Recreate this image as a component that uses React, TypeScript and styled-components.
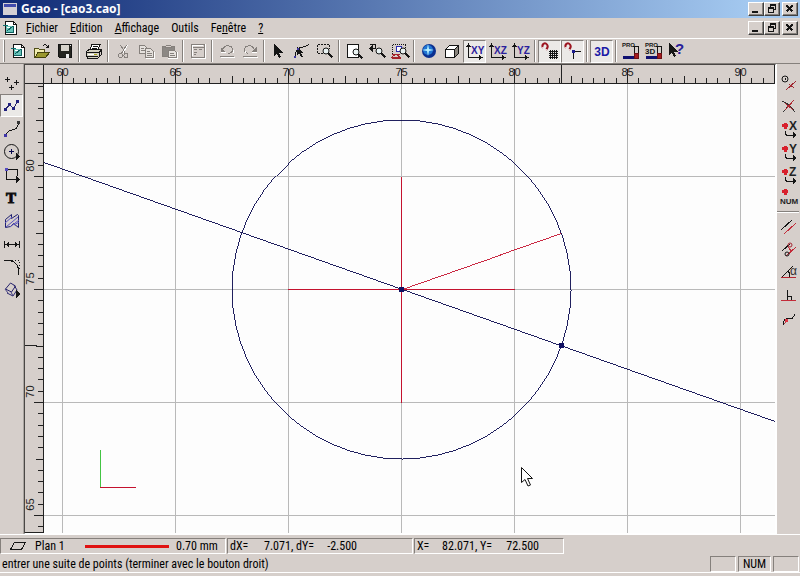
import React from "react";
import styled, { createGlobalStyle, css } from "styled-components";

const face = "#d6cfcb";
const shade = "#85807c";
const ink = "#151515";
const navy = "#08084e";
const red = "#c4122f";

const GlobalStyle = createGlobalStyle`
  * { box-sizing: border-box; }
  body { margin: 0; background: ${face}; }
  body, button {
    font-family: "Roboto Condensed", Roboto, "Liberation Sans", sans-serif;
    font-size: 12px;
    line-height: 14px;
    color: #000;
  }
`;

const Window = styled.div`
  display: flex;
  flex-direction: column;
  height: 100vh;
  background: ${face};
  cursor: default;
  overflow: hidden;
`;

const TitleBar = styled.header`
  flex: none;
  display: flex;
  align-items: center;
  height: 18px;
  padding: 0 2px 0 3px;
  gap: 4px;
  background: linear-gradient(90deg, #0f2a75 0%, #a4c9f0 94%);
`;

const Title = styled.h1`
  flex: 1;
  margin: 0;
  color: #fff;
  font: bold 12px/18px "Noto Sans", "Open Sans", sans-serif;
  white-space: pre;
`;

const MenuBar = styled.nav`
  flex: none;
  display: flex;
  align-items: center;
  height: 21px;
  padding: 0 2px 0 3px;
  border-bottom: 1px solid #fff;
`;

const MenuItems = styled.div`
  display: flex;
  flex: 1;
  padding-left: 1px;
`;

const MenuItem = styled.button`
  border: 0;
  padding: 0 6px;
  background: none;
  line-height: 18px;
  white-space: nowrap;
`;

const WindowButtons = styled.div`
  display: flex;
`;

const WindowButton = styled.button<{ $apart?: boolean }>`
  display: flex;
  align-items: center;
  justify-content: center;
  width: 16px;
  height: 14px;
  margin-left: ${(p) => (p.$apart ? 2 : 0)}px;
  padding: 0;
  background: ${face};
  border: 1px solid;
  border-color: #fff #404040 #404040 #fff;
  box-shadow: inset -1px -1px 0 ${shade};
`;

const ToolBar = styled.div`
  flex: none;
  display: flex;
  align-items: center;
  height: 25px;
  padding: 0 0 0 3px;
  border-bottom: 1px solid ${shade};
`;

const Grip = styled.span`
  width: 2px;
  height: 22px;
  margin-right: 2px;
  border-left: 1px solid #fff;
  border-right: 1px solid ${shade};
`;

const Separator = styled.span<{ $across?: boolean }>`
  flex: none;
  ${(p) =>
    p.$across
      ? css`
          width: 22px;
          height: 2px;
          margin: 2px 0;
          border-top: 1px solid ${shade};
          border-bottom: 1px solid #fff;
        `
      : css`
          width: 2px;
          height: 22px;
          margin: 0 2px;
          border-left: 1px solid ${shade};
          border-right: 1px solid #fff;
        `}
`;

const ToolButton = styled.button<{ $down?: boolean }>`
  flex: none;
  display: flex;
  align-items: center;
  justify-content: center;
  width: 23px;
  height: 23px;
  padding: 0;
  border: 1px solid transparent;
  background: none;
  ${(p) =>
    p.$down &&
    css`
      background: #ebe9e7;
      border-color: ${shade} #fff #fff ${shade};
    `}
`;

const Glyph = styled.svg`
  display: block;
  flex: none;
  overflow: visible;
`;

const Main = styled.main`
  flex: 1;
  display: flex;
  min-height: 0;
`;

const SideBar = styled.div<{ $right?: boolean }>`
  flex: none;
  display: flex;
  flex-direction: column;
  width: 24px;
  padding-top: 7px;
  border-left: ${(p) => (p.$right ? "1px solid #fff" : "0")};
  border-right: ${(p) => (p.$right ? "0" : "1px solid #aaa5a1")};
`;

const Workspace = styled.section`
  flex: 1;
  display: grid;
  grid-template: 19px 1fr / 19px 1fr;
  min-width: 0;
  border: 1px solid #4a4745;
  border-right-color: #fff;
  border-bottom-color: #fff;
`;

const RulerCell = styled.div`
  min-width: 0;
  min-height: 0;
  overflow: hidden;
  border-right: 1px solid #222;
  border-bottom: 1px solid #222;
`;

const Sheet = styled.div`
  min-width: 0;
  min-height: 0;
  overflow: hidden;
  background: #fdfdfd;
`;

const Drawing = styled.svg`
  display: block;
  width: 100%;
  height: 100%;
  font-family: "Liberation Sans", Arial, sans-serif;
  font-size: 11px;
`;

const InfoBar = styled.div`
  flex: none;
  display: flex;
  height: 21px;
  padding: 3px 0 1px;
  border-top: 1px solid #fff;
`;

const InfoPanel = styled.div<{ $width: number }>`
  display: flex;
  align-items: center;
  width: ${(p) => p.$width}px;
  margin-right: 1px;
  padding-left: 2px;
  border: 1px solid;
  border-color: ${shade} #fff #fff ${shade};
  white-space: pre;
`;

const Figure = styled.span<{ $width: number; $right?: boolean }>`
  width: ${(p) => p.$width}px;
  text-align: ${(p) => (p.$right ? "right" : "left")};
`;

const PlaneName = styled.span`
  width: 49px;
  padding-left: 6px;
  margin-right: 7px;
`;

const LineSample = styled.span`
  width: 84px;
  height: 3px;
  margin-right: 7px;
  background: #e01212;
`;

const StatusBar = styled.footer`
  flex: none;
  display: flex;
  align-items: center;
  gap: 2px;
  height: 18px;
  margin-bottom: 3px;
  padding: 0 1px 0 2px;
  border-bottom: 1px solid #fff;
`;

const Message = styled.span`
  flex: 1;
  white-space: nowrap;
`;

const Indicator = styled.span<{ $width: number }>`
  width: ${(p) => p.$width}px;
  height: 16px;
  border: 1px solid;
  border-color: ${shade} #fff #fff ${shade};
  text-align: center;
`;

function Icon({ children, w = 16, h = 16 }: { children: React.ReactNode; w?: number; h?: number }) {
  return (
    <Glyph
      width={w}
      height={h}
      viewBox={`0 0 ${w} ${h}`}
      fill="none"
      stroke={ink}
      strokeWidth="1"
      shapeRendering="crispEdges"
      fontFamily="Liberation Sans, sans-serif"
      aria-hidden="true"
    >
      {children}
    </Glyph>
  );
}

const DocIcon = () => (
  <Icon>
    <path d="M2.5 1.5h8l3 3v10h-11z" fill="#fff" />
    <path d="M10.5 1.5v3h3" />
    <path d="M0 5.5h5" stroke="#0e7070" />
    <path d="M3 6h8v7H3z" fill="#67c2b8" stroke="none" />
    <path d="M3 12.500h8M10.500 6v7M4 11l6-5" stroke="#0e6060" />
    <path d="M4 7.500h3" stroke="#fff" />
  </Icon>
);

const Lens = ({ x, y }: { x: number; y: number }) => (
  <g>
    <circle cx={x} cy={y} r="3" fill="#e9f2f2" shapeRendering="auto" />
    <path d={`M${x + 2.5} ${y + 2.5}l4 4`} strokeWidth="2" />
  </g>
);

const Magnet = () => (
  <g shapeRendering="auto">
    <path d="M1 5C-1 1 3-1 5 1.500S5 5 4 7" stroke="#9c1520" strokeWidth="2" />
    <path d="M0 5l2-1M3 6l2 1" stroke="#fff" />
  </g>
);

const Axes = ({ name }: { name: string }) => (
  <Icon>
    <path d="M1.500 1v13.500H15" />
    <path d="M-1 4l2.500-4L4 4zM12 12l4 2.500-4 2.500z" fill={ink} stroke="none" />
    <text x="4" y="11" fontSize="10" fontWeight="bold" fill="#2a209c" stroke="none">
      {name}
    </text>
  </Icon>
);

const ProIcon = ({ three }: { three?: boolean }) => (
  <Icon>
    <text x="-1" y="4" fontSize="6" fontWeight="bold" fill={ink} stroke="none">
      PRO
    </text>
    {three && (
      <text x="-1" y="11" fontSize="8" fontWeight="bold" fill={ink} stroke="none">
        3D
      </text>
    )}
    <path d="M10 3.500h5.500v11h-3M11.500 4v8" />
    <path d="M0 14.500h12" stroke="#101070" strokeWidth="3" />
    <path d="M11 10h4v5h-4z" fill="#a31b20" stroke="#6d1014" />
  </Icon>
);

type Tool = { id: string; label: string; art: React.ReactNode; down?: boolean };
const bar: (Tool | null)[] = [
  { id: "new", label: "Nouveau", art: <DocIcon /> },
  {
    id: "open",
    label: "Ouvrir",
    art: (
      <Icon>
        <path d="M.5 14V5.500h4l1 1h5V9" fill="#f2eeb0" stroke="#504e18" />
        <path d="M1 14.500L4 9.500h11.500l-4 5z" fill="#9a982e" stroke="#44420e" />
        <path d="M8.500 3.500c2-3 4-2 5.500.5M14.500 1.500v3h-3" />
      </Icon>
    ),
  },
  {
    id: "save",
    label: "Enregistrer",
    art: (
      <Icon>
        <path d="M1.500 1.500h13v13h-12l-1-1z" fill="#252520" />
        <path d="M4 2h8v6H4z" fill="#d8d4cc" stroke="none" />
        <path d="M9 10.500h3v4H9zM13 2h1v1h-1z" fill="#eee" stroke="none" />
      </Icon>
    ),
  },
  null,
  {
    id: "print",
    label: "Imprimer",
    art: (
      <Icon>
        <path d="M4 7l2-5.500h8L12 7" fill="#fff" />
        <path d="M7 3.500h5M6 5.500h5" />
        <path d="M.5 8.500l2.500-2h12.500l-2 3v4l-2 2H2l-1.500-2z" fill="#d4d0c0" />
        <path d="M.5 9.500h12M1 13.500h11M13 9l2-2v5l-2 2" />
        <path d="M2 11.500h9" stroke="#fff" />
        <path d="M8 11.500h3" stroke="#aaa41c" />
      </Icon>
    ),
  },
  null,
  {
    id: "cut",
    label: "Couper",
    art: (
      <Icon>
        <path d="M5.500 2l5 8.500M11.500 2l-5 8.500" stroke={shade} />
        <path d="M12.500 2L8 10" stroke="#fff" />
        <circle cx="5.500" cy="12.500" r="2" stroke={shade} />
        <circle cx="11" cy="12.500" r="2" stroke={shade} />
      </Icon>
    ),
  },
  {
    id: "copy",
    label: "Copier",
    art: (
      <Icon>
        <path d="M1.500 2.500h5l2 2v6h-7z" fill="#e5e1dd" stroke={shade} />
        <path d="M7.500 5.500h5l3 3v6h-8z" fill="#e5e1dd" stroke={shade} />
        <path d="M3 5.500h3M3 7.500h4M9 8.500h3M9 10.500h5M9 12.500h5" stroke={shade} />
        <path d="M8 15.500h8.500V9" stroke="#fff" />
      </Icon>
    ),
  },
  {
    id: "paste",
    label: "Coller",
    art: (
      <Icon>
        <path d="M1.500 3.500h12v10h-12z" fill="#8c8884" stroke={shade} />
        <path d="M4.500 4.500l1-2.500h4l1 2.500z" fill={face} stroke={shade} />
        <path d="M7.500 7.500h6l2 2v5h-8z" fill="#e8e4e0" stroke={shade} />
        <path d="M9 10.500h4M9 12.500h5" stroke={shade} />
        <path d="M7 15.500h9.500V9" stroke="#fff" />
      </Icon>
    ),
  },
  null,
  {
    id: "properties",
    label: "Propriétés",
    art: (
      <Icon>
        <path d="M1.500 1.500h13v13h-13z" stroke={shade} />
        <path d="M2 4.500h12M4 6.500h3M9 6.500h3M4 9.500h3M4 11.500h2" stroke={shade} />
        <path d="M2.500 13V2.500H13M15.500 1v14.500H2" stroke="#fff" />
      </Icon>
    ),
  },
  null,
  {
    id: "undo",
    label: "Annuler",
    art: (
      <Icon>
        <path d="M1 13.500h14M3.500 6.500C6 1 14 2 13.500 7c0 2-2 3-4 3.500" stroke={shade} />
        <path d="M1.500 4v5h5z" fill={shade} stroke="none" />
        <path d="M2 14.500h14M2 9.500h5M14.500 7v3" stroke="#fff" />
      </Icon>
    ),
  },
  {
    id: "redo",
    label: "Rétablir",
    art: (
      <Icon>
        <path d="M1 13.500h14M12.500 6.500C10 1 2 2 2.500 7c0 2 2 3 4 3.500" stroke={shade} />
        <path d="M14.500 4v5h-5z" fill={shade} stroke="none" />
        <path d="M2 14.500h14M10 9.500h5M3.500 8v2" stroke="#fff" />
      </Icon>
    ),
  },
  null,
  {
    id: "select",
    label: "Sélection",
    art: (
      <Icon>
        <path d="M3 1v12l3-2.500 2 4.500 2-1-2-4.500h4z" fill={ink} stroke="none" />
      </Icon>
    ),
  },
  {
    id: "nodes",
    label: "Modifier les points",
    art: (
      <Icon>
        <path d="M1 14.500C1 9 3 5 7 4.500c3-.5 5-1 8-3" />
        <path d="M3 4v8l2-1.500 2.500 4 1.500-1L7 10h3z" fill={ink} stroke="none" />
        <path d="M0 13.500h2M3 6h2" stroke="#3d34a0" strokeWidth="2" />
      </Icon>
    ),
  },
  {
    id: "zoom-window",
    label: "Zoom fenêtre",
    art: (
      <Icon>
        <path d="M.5 1.500h12M.5 10.500h12M.5 1.500v9M12.500 1.500v4" strokeDasharray="2 1" />
        <Lens x={9} y={8} />
      </Icon>
    ),
  },
  null,
  {
    id: "zoom-page",
    label: "Zoom page",
    art: (
      <Icon>
        <path d="M1.500 1.500h11v13h-11z" fill="#fff" />
        <Lens x={10} y={9} />
      </Icon>
    ),
  },
  {
    id: "zoom-previous",
    label: "Zoom précédent",
    art: (
      <Icon>
        <path d="M1 1.500h5.500v4H2" />
        <path d="M0 5.500L4 2v7z" fill={ink} stroke="none" />
        <Lens x={10} y={8} />
      </Icon>
    ),
  },
  {
    id: "zoom-all",
    label: "Zoom tout",
    art: (
      <Icon>
        <path d="M.5 1.500h13M.5 1.500v9M13.500 1.500v4" strokeDasharray="1 1" />
        <path d="M4 3h5v5H4z" fill="#fff" stroke="#2b2bb0" />
        <path d="M0 14l4-3 4 3zM0 11.500h8M0 15.500h9" stroke="#a3232c" />
        <Lens x={11} y={8} />
      </Icon>
    ),
  },
  null,
  {
    id: "render",
    label: "Rendu",
    art: (
      <Icon>
        <g shapeRendering="auto" stroke="none">
          <circle cx="8" cy="8" r="7" fill="#0a2f90" />
          <circle cx="7" cy="7" r="5" fill="#1f74d2" />
          <path d="M7 1l1 5 5 1-5 1-1 5-1-5-5-1 5-1z" fill="#b5efff" />
        </g>
      </Icon>
    ),
  },
  {
    id: "cube",
    label: "Vue 3D",
    art: (
      <Icon>
        <path d="M1.500 6.500l4-4h9v8l-4 4h-9z" fill="#fff" />
        <path d="M10.500 6.500l4-4v8l-4 4z" fill="#8a857e" />
        <path d="M1.500 6.500h9v8" />
      </Icon>
    ),
  },
  { id: "xy", label: "Plan XY", art: <Axes name="XY" />, down: true },
  { id: "xz", label: "Plan XZ", art: <Axes name="XZ" /> },
  { id: "yz", label: "Plan YZ", art: <Axes name="YZ" /> },
  null,
  {
    id: "snap-grid",
    label: "Aimanter à la grille",
    down: true,
    art: (
      <Icon>
        <Magnet />
        <path d="M8.500 7v9M10.500 7v9M12.500 7v9M14.500 7v9M7 8.500h9M7 10.500h9M7 12.500h9M7 14.500h9" />
      </Icon>
    ),
  },
  {
    id: "snap-point",
    label: "Aimanter aux points",
    down: true,
    art: (
      <Icon>
        <Magnet />
        <path d="M8.500 16V8.500H16" />
        <path d="M7 7h3v3H7z" fill="#1c1c8e" stroke="none" />
      </Icon>
    ),
  },
  null,
  {
    id: "3d",
    label: "3D",
    down: true,
    art: (
      <Icon>
        <text x="8" y="13" fontSize="12" fontWeight="bold" textAnchor="middle" fill="#1a1aa6" stroke="none">
          3D
        </text>
      </Icon>
    ),
  },
  null,
  { id: "pro", label: "PRO", art: <ProIcon /> },
  { id: "pro3d", label: "PRO 3D", art: <ProIcon three /> },
  {
    id: "help",
    label: "Aide contextuelle",
    art: (
      <Icon>
        <path d="M0 0v12l3-2.500 2 4.500 2-1-2-4.500h4z" fill={ink} stroke="none" />
        <text x="6" y="11" fontSize="15" fontWeight="bold" fill="#28209a" stroke="none">
          ?
        </text>
      </Icon>
    ),
  },
];

const drawTools: Tool[] = [
  {
    id: "points",
    label: "Points",
    art: (
      <Icon>
        <path d="M1 4.500h5M3.500 2v5M10 7.500h5M12.500 5v5M5 12.500h5M7.500 10v5" />
      </Icon>
    ),
  },
  {
    id: "polyline",
    label: "Suite de points",
    down: true,
    art: (
      <Icon>
        <path d="M1.500 11.500l4-5 4 4 4-7" stroke="#252567" />
        <path d="M0 10h3v3H0zM4 5h3v3H4zM8 9h3v3H8zM12 2h3v3h-3z" fill="#20207f" stroke="none" />
      </Icon>
    ),
  },
  {
    id: "curve",
    label: "Courbe",
    art: (
      <Icon>
        <path d="M1 14c3-3 4-5 7-5s6-1 6.500-8" />
        <path d="M0 13h3v3H0z" fill="#4035a8" stroke="none" />
        <path d="M13 0h3v3h-3z" fill="#333" stroke="none" />
      </Icon>
    ),
  },
  {
    id: "circle",
    label: "Cercle",
    art: (
      <Icon>
        <circle cx="7.500" cy="7.500" r="7" shapeRendering="auto" />
        <path d="M5 7.500h5M7.500 5v5" stroke={navy} />
        <path d="M12 9v7l4-3.500z" fill={ink} stroke="none" />
      </Icon>
    ),
  },
  {
    id: "rectangle",
    label: "Rectangle",
    art: (
      <Icon>
        <path d="M12 12.500H2.500v-10h11V9" />
        <path d="M12 9v7l4-3.500z" fill={ink} stroke="none" />
        <path d="M1 1h3v3H1z" fill="#554bc0" stroke="none" />
      </Icon>
    ),
  },
  {
    id: "text",
    label: "Texte",
    art: (
      <Icon>
        <text x="7" y="13" fontSize="15" fontWeight="bold" fontFamily="Liberation Serif, serif" textAnchor="middle" fill="#000">
          T
        </text>
      </Icon>
    ),
  },
  {
    id: "hatch",
    label: "Hachures",
    art: (
      <Icon>
        <g shapeRendering="auto">
          <path d="M1.500 6.500l6-5v4l6-4 1 1v12l-5-4-3 3-5 1z" stroke="#20206f" />
          <path d="M1 10l7-6M2 14L14 4M6 14l9-7M10 12l5-3" stroke="#5b55c0" />
        </g>
      </Icon>
    ),
  },
  {
    id: "dimension",
    label: "Cote",
    art: (
      <Icon>
        <path d="M.5 5v7M15.500 5v7M1 8.500h14" />
        <path d="M1 8.500l4-2.500v5zM15 8.500l-4-2.500v5z" fill={ink} stroke="none" />
      </Icon>
    ),
  },
  {
    id: "fillet",
    label: "Congé",
    art: (
      <Icon>
        <path d="M0 1.500h4c7 0 11 5 11 14" />
        <path d="M5 1.500h10.500V12" strokeDasharray="1 2" />
      </Icon>
    ),
  },
  {
    id: "transform",
    label: "Transformer",
    art: (
      <Icon>
        <g shapeRendering="auto">
          <path d="M1.500 7l5-6 5 3-4 6zM3 11l6 3 4-6-3-5" stroke="#28246d" />
          <path d="M1 7l3 4M7 10l2 4" stroke="#433e83" />
        </g>
        <path d="M12 8v8l4-4z" fill={ink} stroke="none" />
      </Icon>
    ),
  },
];

const RedPlus = () => <path d="M1 4.500h6M4 1.500v6" stroke="#d8202c" strokeWidth="3" />;

const AxisSnap = ({ name }: { name: string }) => (
  <Icon>
    <RedPlus />
    <text x="8" y="9" fontSize="12" fontWeight="bold" fill="#222" stroke="none">
      {name}
    </text>
    <path d="M4 10v3l2 1.500h8" />
    <path d="M12 11v6l4-3z" fill={ink} stroke="none" />
  </Icon>
);

const snapTools: (Tool | null)[] = [
  {
    id: "centre",
    label: "Centre",
    art: (
      <Icon>
        <circle cx="4" cy="4" r="3" shapeRendering="auto" />
        <path d="M4 3v2" />
        <path d="M5 15L15 6M8 9l5 4" stroke="#a02832" />
      </Icon>
    ),
  },
  {
    id: "intersection",
    label: "Intersection",
    art: (
      <Icon>
        <path d="M1 3c6 2 9 5 13 11M2 14L13 2" stroke="#333" />
        <path d="M4 12l9-10M4 5l8 7" stroke="#b12832" />
      </Icon>
    ),
  },
  { id: "lock-x", label: "X", art: <AxisSnap name="X" /> },
  { id: "lock-y", label: "Y", art: <AxisSnap name="Y" /> },
  { id: "lock-z", label: "Z", art: <AxisSnap name="Z" /> },
  {
    id: "num",
    label: "Saisie numérique",
    art: (
      <Icon>
        <g transform="translate(0 -3)">
          <RedPlus />
        </g>
        <text x="-1" y="14" fontSize="8" fontWeight="bold" fill="#222" stroke="none">
          NUM
        </text>
      </Icon>
    ),
  },
  null,
  {
    id: "parallel",
    label: "Parallèle",
    art: (
      <Icon>
        <path d="M0 11L11 1" />
        <path d="M3 15L15 4" stroke="#c32b39" />
      </Icon>
    ),
  },
  {
    id: "parallel-offset",
    label: "Parallèle à distance",
    art: (
      <Icon>
        <path d="M1 9l8-7" />
        <path d="M5 14L15 5M7 5l4 5" stroke="#c32b39" />
        <g shapeRendering="auto">
          <circle cx="9" cy="3" r="2" stroke="#a62834" />
          <circle cx="6" cy="12" r="2" />
        </g>
      </Icon>
    ),
  },
  {
    id: "angle",
    label: "Angle",
    art: (
      <Icon>
        <path d="M1 12L12 1M6 6c3 1 3 3 3 6" />
        <path d="M0 12.500h15" stroke="#b42732" />
        <text x="9" y="10" fontSize="12" fill="#333" stroke="none">
          α
        </text>
      </Icon>
    ),
  },
  {
    id: "perpendicular",
    label: "Perpendiculaire",
    art: (
      <Icon>
        <path d="M6.500 2v11M7 8.500h3.500V13" />
        <path d="M0 12.500h15" stroke="#c32b39" />
      </Icon>
    ),
  },
  {
    id: "tangent-curve",
    label: "Tangente",
    art: (
      <Icon>
        <path d="M2 14c1-8 4-6 7-6s4-3 5-5" />
        <path d="M3 13l4-4" stroke="#b33a46" />
        <path d="M4 8h3v3H4z" fill="#df3343" stroke="none" />
      </Icon>
    ),
  },
];

const Minimise = () => (
  <Icon w={10} h={10}>
    <path d="M1 8h6" strokeWidth="2" />
  </Icon>
);
const Restore = () => (
  <Icon w={10} h={10}>
    <path d="M3.500 3V.5h5v5H6M3 1.500h6M1.500 3.500h5v5h-5zM1 4.500h6" />
  </Icon>
);
const Close = () => (
  <Icon w={10} h={10}>
    <path d="M1.500 1.500l6 6M7.500 1.500l-6 6" strokeWidth="2" />
  </Icon>
);

const CaptionButtons = ({ target }: { target: string }) => (
  <WindowButtons>
    <WindowButton aria-label={`Réduire ${target}`}>
      <Minimise />
    </WindowButton>
    <WindowButton aria-label={`Restaurer ${target}`}>
      <Restore />
    </WindowButton>
    <WindowButton $apart aria-label={`Fermer ${target}`}>
      <Close />
    </WindowButton>
  </WindowButtons>
);

const Tools = ({ items, across }: { items: (Tool | null)[]; across?: boolean }) => (
  <>
    {items.map((t, i) =>
      t ? (
        <ToolButton key={t.id} $down={t.down} aria-label={t.label} aria-pressed={t.down}>
          {t.art}
        </ToolButton>
      ) : (
        <Separator key={i} $across={across} />
      )
    )}
  </>
);

// Drawing scale: one unit is 22.6 px; unit 60 lies at x = 18 and unit 80 at y = 92 on the sheet.
const step = 11.3;
const xAt = (half: number) => Math.round(18 + half * step) + 0.5;
const yAt = (half: number) => Math.round(92 + half * step) + 0.5;

// The circle is drawn as a closed run of short chords.
const chords = Array.from({ length: 60 }, (_, i) => {
  const a = (i * Math.PI) / 30;
  return `${(357.5 + 169.5 * Math.cos(a)).toFixed(1)},${(205.5 + 169.5 * Math.sin(a)).toFixed(1)}`;
}).join(" ");

const TopRuler = () => (
  <Drawing shapeRendering="crispEdges" aria-hidden="true">
    {Array.from({ length: 66 }, (_, k) => k - 1).map((k) => {
      const top = k % 10 === 0 ? 4 : k % 5 === 0 ? 11 : 13;
      return <path key={k} d={`M${xAt(k)} ${top}V18`} stroke="#222" />;
    })}
    {[60, 65, 70, 75, 80, 85, 90].map((n, i) => (
      <text key={n} x={xAt(i * 10)} y="11" textAnchor="middle" fill="#222">
        {n}
      </text>
    ))}
    <path d="M517.500 0V18" stroke="#222" />
  </Drawing>
);

const SideRuler = () => (
  <Drawing shapeRendering="crispEdges" aria-hidden="true">
    {Array.from({ length: 41 }, (_, k) => k - 8).map((k) => {
      const left = k % 10 === 0 ? 9 : k % 5 === 0 ? 11 : 13;
      return <path key={k} d={`M${left} ${yAt(k)}H18`} stroke="#222" />;
    })}
    {[80, 75, 70, 65].map((n, i) => (
      <text key={n} transform={`translate(9 ${yAt(i * 10) - 11}) rotate(-90)`} textAnchor="middle" fill="#222">
        {n}
      </text>
    ))}
    <path d="M0 261.500H12" stroke="#222" />
  </Drawing>
);

const Plan = () => (
  <Drawing fill="none" role="img" aria-label="Plan 1">
    <g shapeRendering="crispEdges">
      <g stroke="#b9b9b9">
        {[0, 10, 20, 30, 40, 50, 60].map((k) => (
          <line key={k} x1={xAt(k)} x2={xAt(k)} y1="0" y2="100%" />
        ))}
        {[0, 10, 20, 30].map((k) => (
          <line key={k} x1="0" x2="100%" y1={yAt(k)} y2={yAt(k)} />
        ))}
      </g>
      <path d="M244 205h227v1H244zM357 93h1v226h-1zM56 403h36v1H56z" fill={red} />
      <path d="M357.500 205.500L517.500 149.500" stroke={red} strokeWidth=".9" />
      <polygon points={chords} stroke={navy} strokeWidth=".9" />
      <path d="M0 78.500L731 337.500" stroke={navy} strokeWidth=".9" />
      <path d="M355 203h5v5h-5zM515 259h5v5h-5z" fill="#101062" />
      <path d="M56.500 366V403" stroke="#43c443" />
    </g>
    <path d="M477.500 383.500v15l3.500-3 3 6.500 2.500-1-3-6.500h5z" fill="#fff" stroke="#111" />
  </Drawing>
);

const menus: [string, string, string][] = [
  ["", "F", "ichier"],
  ["", "E", "dition"],
  ["", "A", "ffichage"],
  ["Outils", "", ""],
  ["Fe", "n", "être"],
  ["", "?", ""],
];

export default function App() {
  return (
    <Window>
      <GlobalStyle />
      <TitleBar>
        <Icon w={14} h={12}>
          <path d="M0 0h14v12H0z" fill="#d3d0d5" stroke="none" />
          <path d="M1 1h12v3H1z" fill="#414bad" stroke="none" />
        </Icon>
        <Title>Gcao - [cao3.cao]</Title>
        <CaptionButtons target="la fenêtre" />
      </TitleBar>
      <MenuBar>
        <DocIcon />
        <MenuItems>
          {menus.map(([before, key, after]) => (
            <MenuItem key={before + key + after}>
              {before}
              {key && <u>{key}</u>}
              {after}
            </MenuItem>
          ))}
        </MenuItems>
        <CaptionButtons target="le document" />
      </MenuBar>
      <ToolBar role="toolbar" aria-label="Outils">
        <Grip />
        <Tools items={bar} />
      </ToolBar>
      <Main>
        <SideBar role="toolbar" aria-label="Dessin">
          <Tools items={drawTools} across />
        </SideBar>
        <Workspace>
          <RulerCell />
          <RulerCell>
            <TopRuler />
          </RulerCell>
          <RulerCell>
            <SideRuler />
          </RulerCell>
          <Sheet>
            <Plan />
          </Sheet>
        </Workspace>
        <SideBar $right role="toolbar" aria-label="Accrochage">
          <Tools items={snapTools} across />
        </SideBar>
      </Main>
      <InfoBar>
        <InfoPanel $width={226}>
          <Icon w={26} h={12}>
            <path d="M7.500 9.500h11l4-7h-11z" />
          </Icon>
          <PlaneName>Plan 1</PlaneName>
          <LineSample />
          <span>0.70 mm</span>
        </InfoPanel>
        <InfoPanel $width={186}>
          <Figure $width={20}>dX=</Figure>
          <Figure $width={46} $right>7.071, </Figure>
          <Figure $width={20}>dY=</Figure>
          <Figure $width={41} $right>-2.500</Figure>
        </InfoPanel>
        <InfoPanel $width={150}>
          <Figure $width={14}>X=</Figure>
          <Figure $width={49} $right>82.071, </Figure>
          <Figure $width={14}>Y=</Figure>
          <Figure $width={45} $right>72.500</Figure>
        </InfoPanel>
      </InfoBar>
      <StatusBar>
        <Message>entrer une suite de points (terminer avec le bouton droit)</Message>
        <Indicator $width={26} />
        <Indicator $width={33}>NUM</Indicator>
        <Indicator $width={26} />
      </StatusBar>
    </Window>
  );
}
